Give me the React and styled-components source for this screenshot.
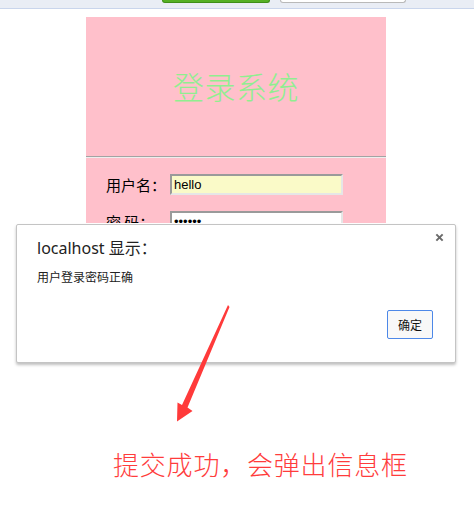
import React from "react";
import styled, { createGlobalStyle } from "styled-components";

const GlobalStyle = createGlobalStyle`
  html, body {
    margin: 0;
    padding: 0;
    background: #ffffff;
  }

  body {
    font-family: "Noto Sans", "Noto Sans CJK SC", sans-serif;
  }
`;

const App = () => {
  return (
    <>
      <GlobalStyle />
      <Page>
        <BrowserBar>
          <BarButton $primary />
          <BarButton />
        </BrowserBar>

        <LoginPanel>
          <PanelTitle>登录系统</PanelTitle>
          <Divider />
          <LoginForm>
            <FormRow>
              <Label>用户名：</Label>
              <Field $autofill>hello</Field>
            </FormRow>
            <FormRow>
              <Label>密&nbsp;码：</Label>
              <Field>••••••</Field>
            </FormRow>
          </LoginForm>
        </LoginPanel>

        <Stage>
          <AlertBox>
            <CloseMark viewBox="0 0 10 10" aria-hidden="true">
              <path d="M1.5 1.5 L8.5 8.5 M8.5 1.5 L1.5 8.5" />
            </CloseMark>
            <AlertTitle>localhost 显示：</AlertTitle>
            <AlertMessage>用户登录密码正确</AlertMessage>
            <AlertFooter>
              <OkButton>确定</OkButton>
            </AlertFooter>
          </AlertBox>

          <Arrow viewBox="0 0 474 525" aria-hidden="true">
            <polygon
              points="228,305 229.5,307 187.5,407.5 192.5,411 177,421.5 177.5,402.5 182,405"
              fill="#ff3a3a"
            />
          </Arrow>

          <Caption>提交成功，会弹出信息框</Caption>
        </Stage>
      </Page>
    </>
  );
};

export default App;

const Page = styled.div`
  width: 474px;
  height: 525px;
  overflow: hidden;
  position: relative;
`;

const BrowserBar = styled.div`
  height: 8px;
  background: #e9edf5;
  border-bottom: 1px solid #c9d5ec;
  display: flex;
  align-items: flex-start;
  gap: 10px;
  padding-left: 162px;
`;

const BarButton = styled.div`
  width: ${(p) => (p.$primary ? "108px" : "126px")};
  height: 3px;
  box-sizing: border-box;
  border-radius: 0 0 4px 4px;
  background: ${(p) => (p.$primary ? "#56b025" : "#ffffff")};
  border: 1px solid ${(p) => (p.$primary ? "#3f8f18" : "#b9b9b9")};
  border-top: none;
`;

const LoginPanel = styled.div`
  margin: 8px 0 0 86px;
  width: 300px;
  height: 206px;
  overflow: hidden;
  background: #ffc0cb;
`;

const PanelTitle = styled.div`
  height: 136px;
  padding-bottom: 3px;
  display: flex;
  align-items: center;
  justify-content: center;
  color: #90ee90;
  font-family: "Noto Sans CJK SC", sans-serif;
  font-size: 31px;
  font-weight: 300;
  letter-spacing: 0.5px;
`;

const Divider = styled.div`
  height: 0;
  border-top: 1px solid #a3a3a3;
  border-bottom: 1px solid #eeeeee;
`;

const LoginForm = styled.div`
  display: flex;
  flex-direction: column;
  gap: 16px;
  padding: 16px 0 0 20px;
`;

const FormRow = styled.div`
  display: flex;
  align-items: center;
  height: 21px;
`;

const Label = styled.span`
  width: 64px;
  font-family: "Noto Sans CJK SC", sans-serif;
  font-size: 15px;
  color: #000000;
  white-space: nowrap;
`;

const Field = styled.div`
  box-sizing: border-box;
  width: 173px;
  height: 21px;
  padding-left: 2px;
  border: 2px solid;
  border-color: #9a9a9a #e6e6e6 #e6e6e6 #9a9a9a;
  background: ${(p) => (p.$autofill ? "#fafac8" : "#ffffff")};
  font-family: "Liberation Sans", Arial, sans-serif;
  font-size: 13px;
  line-height: 17px;
  color: #000000;
`;

const Stage = styled.div`
  position: relative;
`;

const AlertBox = styled.div`
  position: relative;
  box-sizing: border-box;
  margin: 1px 0 0 16px;
  width: 440px;
  height: 139px;
  padding: 13px 22px 0 20px;
  background: #ffffff;
  border: 1px solid #c4c4c4;
  border-radius: 2px;
  box-shadow: 0 2px 3px rgba(0, 0, 0, 0.25);
  display: flex;
  flex-direction: column;
`;

const CloseMark = styled.svg`
  position: absolute;
  top: 8px;
  right: 11px;
  width: 9px;
  height: 9px;
  stroke: #6b6b6b;
  stroke-width: 2.2;
  fill: none;
`;

const AlertTitle = styled.div`
  font-size: 16px;
  line-height: 20px;
  color: #222222;
`;

const AlertMessage = styled.div`
  margin-top: 12px;
  font-size: 12px;
  line-height: 16px;
  color: #222222;
`;

const AlertFooter = styled.div`
  display: flex;
  justify-content: flex-end;
  margin-top: 24px;
`;

const OkButton = styled.button`
  box-sizing: border-box;
  width: 46px;
  height: 29px;
  padding: 0;
  background: #f8f8f8;
  border: 1px solid #4d88e8;
  border-radius: 2px;
  font-family: "Noto Sans CJK SC", sans-serif;
  font-size: 12px;
  color: #111111;
`;

const Arrow = styled.svg`
  position: absolute;
  left: 0;
  top: -224px;
  width: 474px;
  height: 525px;
  pointer-events: none;
`;

const Caption = styled.div`
  margin: 86px 0 0 113px;
  font-family: "Noto Sans CJK SC", sans-serif;
  font-size: 26px;
  font-weight: 300;
  line-height: 30px;
  color: #ff3c3c;
  letter-spacing: 0.8px;
`;
